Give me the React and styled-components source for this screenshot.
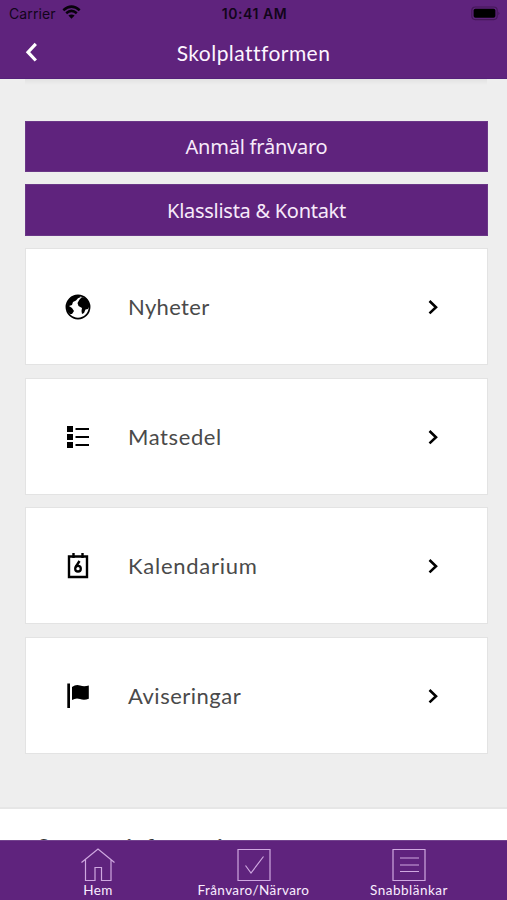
import React from "react";
import styled, { createGlobalStyle } from "styled-components";

const Global = createGlobalStyle`
  * { box-sizing: border-box; }
  body { margin: 0; background: #eee; overflow: hidden; }
`;

const Screen = styled.div`
  width: 507px;
  height: 900px;
  display: flex;
  flex-direction: column;
  overflow: hidden;
  background: #eeeeee;
  font-family: Lato, "Liberation Sans", sans-serif;
`;

const Header = styled.header`
  height: 79px;
  flex: none;
  background: #5f237d;
  border-bottom: 1px solid #55207a;
`;

const StatusBar = styled.div`
  height: 27px;
  display: grid;
  grid-template-columns: 1fr auto 1fr;
  align-items: center;
  padding: 0 7px 0 9px;
  font-family: Inter, sans-serif;
  font-size: 14px;
  color: #12051a;
`;

const Carrier = styled.div`
  display: flex;
  align-items: center;
  gap: 6px;
  letter-spacing: 0.1px;
  svg { display: block; margin-top: -3px; }
`;

const Clock = styled.div`
  font-weight: 600;
  font-size: 14px;
  letter-spacing: 0.55px;
`;

const Battery = styled.svg`
  justify-self: end;
  margin-top: -1px;
`;

const TitleBar = styled.div`
  height: 52px;
  display: grid;
  grid-template-columns: 64px 1fr 64px;
  align-items: center;
`;

const BackButton = styled.button`
  border: 0;
  padding: 0 0 0 24px;
  background: none;
  svg { display: block; }
`;

const Title = styled.h1`
  margin: 0;
  text-align: center;
  font-size: 21px;
  line-height: 26px;
  font-weight: 400;
  letter-spacing: ${(p) => p.$tracking}px;
  color: #fdf5ff;
`;

const Content = styled.main`
  flex: 1;
  min-height: 0;
  display: flex;
  flex-direction: column;
  overflow: hidden;
`;

const PanelEdge = styled.div`
  height: 6px;
  flex: none;
  margin: 0 20px 0 25px;
  background: linear-gradient(#e2e2e2, #eeeeee);
`;

const Actions = styled.div`
  flex: none;
  display: flex;
  flex-direction: column;
  gap: 12px;
  padding: 36px 19px 12px 25px;
`;

const ActionButton = styled.button`
  height: ${(p) => p.$height}px;
  padding: 0;
  border: 1px solid #6a3787;
  background: #5f237d;
  color: #f7eafa;
  font-family: "Noto Sans", sans-serif;
  font-size: 20px;
  letter-spacing: ${(p) => p.$tracking || 0}px;
`;

const CardList = styled.nav`
  flex: none;
  display: flex;
  flex-direction: column;
  gap: 12.5px;
  padding: 0 19px 0 25px;
`;

const Card = styled.a`
  height: 117px;
  display: grid;
  grid-template-columns: 32px 1fr 16px;
  align-items: center;
  padding: 1px 46px 0 36px;
  border: 1px solid #e3e3e3;
  background: #fff;
  color: #4a4a4a;
  svg { display: block; }
`;

const CardLabel = styled.span`
  padding-left: 34px;
  font-size: 22px;
  line-height: 28px;
  letter-spacing: ${(p) => p.$tracking}px;
`;

const InfoSection = styled.section`
  flex: none;
  height: 100px;
  margin-top: 53px;
  padding: 24px 37px 0;
  border-top: 2px solid #e6e6e6;
  background: #fff;
`;

const InfoHeading = styled.h2`
  margin: 0;
  font-size: 23px;
  line-height: 28px;
  letter-spacing: 0.4px;
  color: #333;
  white-space: nowrap;
`;

const TabBar = styled.nav`
  height: 60px;
  flex: none;
  display: grid;
  grid-template-columns: repeat(3, 155.5px);
  justify-content: center;
  border-top: 1px solid #73438e;
  background: #5f237d;
`;

const Tab = styled.a`
  display: flex;
  flex-direction: column;
  align-items: center;
  padding-top: 6px;
  color: #faedff;
  font-size: 13.5px;
  line-height: 16px;
  letter-spacing: ${(p) => p.$tracking}px;
  svg { display: block; margin-bottom: -1px; }
`;

const GlobeIcon = () => (
  <svg width="32" height="32" viewBox="0 0 32 32">
    <circle cx="16" cy="16" r="11.6" fill="#fff" stroke="#000" strokeWidth="1.7" />
    <path d="M5 15C5 9 10 4 16 4L19 6L16 7.2L14 9.5L11 11L10 14L7 15L10 17L12 20L10 23L8 23Q4 20 5 15ZM17.5 8.5L20 6L25 8Q29 14 26 18L23.5 18.5L22 22L20 23L19.5 20L20 17L16.5 15L15.5 12Z" fill="#000" />
  </svg>
);

const ListIcon = () => (
  <svg width="32" height="32" viewBox="0 0 32 32">
    <path d="M5 5h6v6H5zM5 13h6v6H5zM5 21h6v6H5z" fill="#000" />
    <path d="M13.5 8H27M13.5 16H27M13.5 24H27" stroke="#000" strokeWidth="2" />
  </svg>
);

const CalendarIcon = () => (
  <svg width="32" height="32" viewBox="0 0 32 32" fill="none" stroke="#000">
    <path d="M7 6.5H25V27H7Z" strokeWidth="2.4" />
    <path d="M11.5 3V8M20.5 3V8" strokeWidth="2.4" />
    <path d="M17.5 11L13.7 17" strokeWidth="2.4" />
    <circle cx="16" cy="18.7" r="2.8" strokeWidth="2.3" />
  </svg>
);

const FlagIcon = () => (
  <svg width="32" height="32" viewBox="0 0 32 32">
    <path d="M5.3 3.5H8V28H5.3ZM10 7Q14 4 18 5.5T26.8 5.5V18.8Q22 20.5 18 19T10 20Z" fill="#000" />
  </svg>
);

const Chevron = () => (
  <svg width="16" height="18" viewBox="0 0 16 18" fill="none" stroke="#000" strokeWidth="2.6">
    <path d="M4.5 3L11 9.2L4.5 15.4" />
  </svg>
);

const tabIconProps = { width: 36, height: 36, viewBox: "0 0 36 36", fill: "none", stroke: "#cfa8e0", strokeWidth: 1.2 };

const HomeIcon = () => (
  <svg {...tabIconProps}>
    <path d="M1.5 15.5L18 2L34.5 15.5M5.5 12.5V33.5H15V20.5H21.5V33.5H31V12.5" />
  </svg>
);

const CheckIcon = () => (
  <svg {...tabIconProps}>
    <path d="M2 2.5H34V33.5H2ZM9.5 18.5L15 26L27.5 9.5" />
  </svg>
);

const MenuIcon = () => (
  <svg {...tabIconProps}>
    <path d="M2 2.5H34V33.5H2ZM9 11H28M9 18H28M9 24.5H28" />
  </svg>
);

const cards = [
  { label: "Nyheter", Icon: GlobeIcon, tracking: 0.35 },
  { label: "Matsedel", Icon: ListIcon, tracking: 0.6 },
  { label: "Kalendarium", Icon: CalendarIcon, tracking: 0.75 },
  { label: "Aviseringar", Icon: FlagIcon, tracking: 0.5 },
];

const tabs = [
  { label: "Hem", Icon: HomeIcon, tracking: 0.4 },
  { label: "Frånvaro/Närvaro", Icon: CheckIcon, tracking: 0.4 },
  { label: "Snabblänkar", Icon: MenuIcon, tracking: 0.5 },
];

export default function App() {
  return (
    <Screen>
      <Global />
      <Header>
        <StatusBar>
          <Carrier>
            Carrier
            <svg width="19" height="14" viewBox="0 0 19 14" fill="none" stroke="#08020c" strokeWidth="2.5">
              <path d="M1.3 5.2Q9.5 -2 17.7 5.2M4.2 8.2Q9.5 3.6 14.8 8.2" />
              <path d="M6.4 10.6Q9.5 8.2 12.6 10.6L9.5 13.7Z" fill="#08020c" stroke="none" />
            </svg>
          </Carrier>
          <Clock>10:41 AM</Clock>
          <Battery width="29" height="15" viewBox="0 0 29 15">
            <rect x="0.8" y="1" width="25.4" height="12.6" rx="3.5" fill="none" stroke="#451859" strokeWidth="1.2" />
            <rect x="2.6" y="2.8" width="21.8" height="9" rx="1.8" fill="#000" />
            <path d="M27.4 5.4Q29.3 7.3 27.4 9.2Z" fill="#451859" />
          </Battery>
        </StatusBar>
        <TitleBar>
          <BackButton aria-label="Tillbaka">
            <svg width="16" height="22" viewBox="0 0 16 22" fill="none" stroke="#fff" strokeWidth="3.2">
              <path d="M11.8 1.9L4 10.2L11.8 18.5" />
            </svg>
          </BackButton>
          <Title $tracking={0.45}>Skolplattformen</Title>
        </TitleBar>
      </Header>
      <Content>
        <PanelEdge />
        <Actions>
          <ActionButton $height={51} $tracking={-0.22}>Anmäl frånvaro</ActionButton>
          <ActionButton $height={52} $tracking={-0.28}>Klasslista &amp; Kontakt</ActionButton>
        </Actions>
        <CardList>
          {cards.map(({ label, Icon, tracking }) => (
            <Card key={label}>
              <Icon />
              <CardLabel $tracking={tracking}>{label}</CardLabel>
              <Chevron />
            </Card>
          ))}
        </CardList>
        <InfoSection>
          <InfoHeading>Senaste information</InfoHeading>
        </InfoSection>
      </Content>
      <TabBar>
        {tabs.map(({ label, Icon, tracking }) => (
          <Tab key={label} $tracking={tracking}>
            <Icon />
            {label}
          </Tab>
        ))}
      </TabBar>
    </Screen>
  );
}
